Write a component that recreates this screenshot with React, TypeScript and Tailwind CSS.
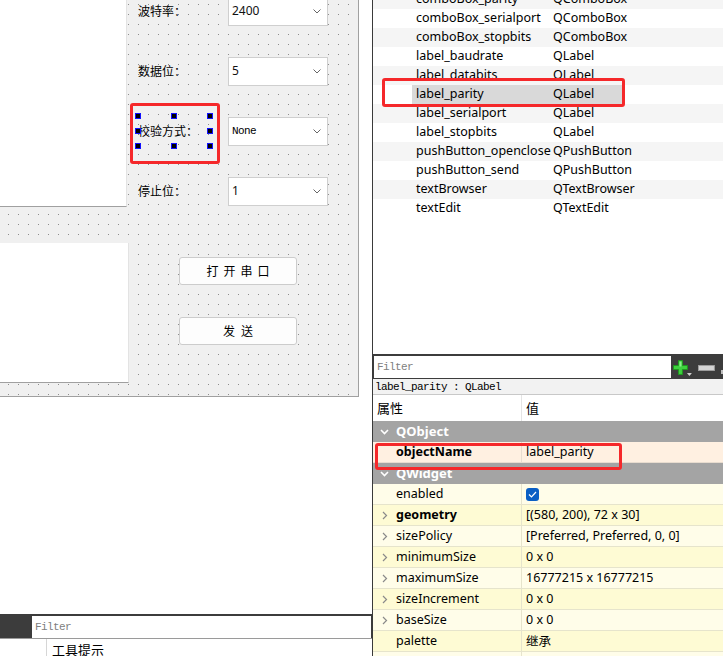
import React from 'react';

const objects: [string, string][] = [
	['comboBox_parity', 'QComboBox'],
	['comboBox_serialport', 'QComboBox'],
	['comboBox_stopbits', 'QComboBox'],
	['label_baudrate', 'QLabel'],
	['label_databits', 'QLabel'],
	['label_parity', 'QLabel'],
	['label_serialport', 'QLabel'],
	['label_stopbits', 'QLabel'],
	['pushButton_openclose', 'QPushButton'],
	['pushButton_send', 'QPushButton'],
	['textBrowser', 'QTextBrowser'],
	['textEdit', 'QTextEdit'],
];

type Prop = { name: string; value?: string; bold?: boolean; expand?: boolean; check?: boolean };

const widgetProps: Prop[] = [
	{ name: 'enabled', check: true },
	{ name: 'geometry', value: '[(580, 200), 72 x 30]', bold: true, expand: true },
	{ name: 'sizePolicy', value: '[Preferred, Preferred, 0, 0]', expand: true },
	{ name: 'minimumSize', value: '0 x 0', expand: true },
	{ name: 'maximumSize', value: '16777215 x 16777215', expand: true },
	{ name: 'sizeIncrement', value: '0 x 0', expand: true },
	{ name: 'baseSize', value: '0 x 0', expand: true },
	{ name: 'palette', value: '继承' },
	{ name: '', value: '' },
];

const fields = [
	{ label: '波特率：', value: '2400' },
	{ label: '数据位：', value: '5' },
	{ label: '校验方式：', value: 'None', mono: true, selected: true },
	{ label: '停止位：', value: '1' },
];

function Chevron({ down, color = '#8a8a8a' }: { down?: boolean; color?: string }) {
	return down ? (
		<svg width="9" height="6" viewBox="0 0 9 6">
			<polyline points="1,1 4.5,4.5 8,1" fill="none" stroke={color} strokeWidth="1.6" />
		</svg>
	) : (
		<svg width="6" height="9" viewBox="0 0 6 9">
			<polyline points="1,1 4.5,4.5 1,8" fill="none" stroke={color} strokeWidth="1.2" />
		</svg>
	);
}

function Combo({ value, mono }: { value: string; mono?: boolean }) {
	return (
		<div className="w-[100px] h-[29px] bg-white border border-[#cfcfcf] flex items-center pl-[3px] pr-[6px]">
			<span
				className={
					mono
						? "flex-1 font-['Liberation_Mono',monospace] text-[11px] tracking-[-0.6px] text-black"
						: "flex-1 font-['Noto_Sans',sans-serif] text-[12px] text-[#111]"
				}>
				{value}
			</span>
			<svg width="8" height="5" viewBox="0 0 8 5">
				<polyline points="0.5,0.5 4,4 7.5,0.5" fill="none" stroke="#666" strokeWidth="1" />
			</svg>
		</div>
	);
}

function Handle({ className }: { className: string }) {
	return <div className={`absolute w-[6px] h-[6px] bg-black border border-[#1010ff] ${className}`} />;
}

export default function App() {
	return (
		<div className="relative w-[723px] h-[656px] flex bg-white overflow-hidden font-['Noto_Sans','Noto_Sans_CJK_SC',sans-serif] text-black">
			{/* left: form canvas */}
			<div className="w-[372px] shrink-0 flex flex-col">
				<div className="w-[359px] h-[397px] shrink-0 flex border-r border-b border-[#a0a0a0] bg-[#f0f0f0] bg-[conic-gradient(from_270deg_at_1px_1px,#8c8c8c_90deg,transparent_0)] bg-size-[10px_10px] bg-position-[8px_4px] overflow-hidden">
					<div className="w-[129px] shrink-0 flex flex-col">
						<div className="h-[207px] w-[127px] bg-white border-b border-r border-b-[#a0a0a0] border-r-[#e3e3e3]" />
						<div className="mt-[36px] h-[140px] w-[129px] bg-white border-b border-r border-b-[#a0a0a0] border-r-[#e3e3e3]" />
					</div>
					<div className="ml-[9px] -mt-[4px] flex flex-col">
						<div className="flex flex-col gap-[30px]">
							{fields.map((f) => (
								<div key={f.label} className="h-[30px] flex items-center">
									<div className="relative w-[72px] h-[30px] mr-[18px] flex items-center font-['Noto_Sans_CJK_SC',sans-serif] text-[12px] leading-none">
										{f.label}
										{f.selected && (
											<>
												<Handle className="left-[-3px] top-[-3px]" />
												<Handle className="left-[33px] top-[-3px]" />
												<Handle className="left-[69px] top-[-3px]" />
												<Handle className="left-[-3px] top-[12px]" />
												<Handle className="left-[69px] top-[12px]" />
												<Handle className="left-[-3px] top-[27px]" />
												<Handle className="left-[33px] top-[27px]" />
												<Handle className="left-[69px] top-[27px]" />
											</>
										)}
									</div>
									<Combo value={f.value} mono={f.mono} />
								</div>
							))}
						</div>
						<div className="ml-[41px] mt-[51px] flex flex-col gap-[32px] font-['Noto_Sans_CJK_SC',sans-serif] text-[12px]">
							<button className="w-[118px] h-[28px] rounded-[3px] bg-[#fdfdfd] border border-[#cccccc] flex items-center justify-center gap-[5px]">
								<span>打</span>
								<span>开</span>
								<span>串</span>
								<span>口</span>
							</button>
							<button className="w-[118px] h-[28px] rounded-[3px] bg-[#fdfdfd] border border-[#cccccc] flex items-center justify-center gap-[6px]">
								<span>发</span>
								<span>送</span>
							</button>
						</div>
					</div>
				</div>
				<div className="flex-1" />
				<div className="h-[42px] shrink-0 flex flex-col">
					<div className="h-[24px] bg-[#3c3c3c] pt-[2px] pl-[32px] flex">
						<div className="w-[339px] h-[22px] bg-white flex items-center pl-[3px] pt-[1px] font-['Liberation_Mono',monospace] text-[11px] tracking-[-0.6px] text-[#808080]">
							Filter
						</div>
					</div>
					<div className="flex-1 border-t border-[#9a9a9a] pl-[46px] flex">
						<div className="border-l border-[#d6d6d6] pl-[5px] pt-[3px] font-['Noto_Sans_CJK_SC',sans-serif] text-[13px] leading-[16px]">
							工具提示
						</div>
					</div>
				</div>
			</div>

			{/* right: object inspector + property editor */}
			<div className="flex-1 min-w-0 flex flex-col border-l border-[#3a3a3a] text-[12.5px]">
				<div className="h-[354px] shrink-0 overflow-hidden bg-white">
					<div className="-mt-[10px]">
						{objects.map(([name, cls], i) => {
							const sel = name === 'label_parity';
							return (
								<div key={name} className={`h-[19px] flex ${i % 2 === 0 ? 'bg-[#f5f5f5]' : 'bg-white'}`}>
									<div className="w-[39px] shrink-0" />
									<div className={`w-[210px] flex items-center pl-[4px] ${sel ? 'bg-[#d9d9d9]' : ''}`}>
										<span className="w-[137px] shrink-0">{name}</span>
										<span>{cls}</span>
									</div>
								</div>
							);
						})}
					</div>
				</div>

				<div className="h-[25px] shrink-0 bg-[#3c3c3c] pt-[2px] pl-[1px] flex items-start">
					<div className="w-[299px] h-[22px] bg-white flex items-center pl-[3px] pt-[1px] font-['Liberation_Mono',monospace] text-[11px] tracking-[-0.6px] text-[#808080]">
						Filter
					</div>
					<svg width="20" height="17" viewBox="0 0 20 17" className="ml-[2px] mt-[4px]">
						<path d="M5.5 0.5h4v5h5v4h-5v5h-4v-5h-5v-4h5z" fill="#3fd23f" stroke="#1f9a1f" />
						<path d="M6.5 1.5h2v5h-2z" fill="#8cf08c" />
						<path d="M14 13h5l-2.5 3z" fill="#d0d0d0" />
					</svg>
					<svg width="18" height="7" viewBox="0 0 18 7" className="ml-[5px] mt-[9px]">
						<rect x="0.5" y="0.5" width="16" height="5" fill="#d4d4d4" stroke="#9c9c9c" />
					</svg>
					<div className="ml-[5px] mt-[14px] w-[2px] h-[4px] bg-[#bdbdbd]" />
				</div>

				<div className="h-[16px] shrink-0 bg-[#f2f2f2] border-b border-[#c8c8c8] flex items-center pl-[2px] pt-[2px] font-['Liberation_Mono',monospace] text-[11px] tracking-[-0.6px] text-black">
					label_parity : QLabel
				</div>

				<div className="h-[26px] shrink-0 flex bg-white font-['Noto_Sans_CJK_SC',sans-serif] text-[13px]">
					<div className="w-[149px] border-r border-[#e4e4e4] flex items-center pl-[4px]">属性</div>
					<div className="flex items-center pl-[4px]">值</div>
				</div>

				<div className="h-[21px] shrink-0 bg-[#a4a4a4] flex items-center text-white font-bold text-[13px]">
					<div className="w-[23px] flex justify-center">
						<Chevron down color="#ffffff" />
					</div>
					QObject
				</div>
				<div className="h-[21px] shrink-0 flex bg-[#fff0e1] border-b border-[#e8dccf]">
					<div className="w-[149px] border-r border-[#e8dccf] flex items-center pl-[23px] font-bold">objectName</div>
					<div className="flex items-center pl-[4px]">label_parity</div>
				</div>
				<div className="h-[21px] shrink-0 bg-[#a4a4a4] flex items-center text-white font-bold text-[13px]">
					<div className="w-[23px] flex justify-center">
						<Chevron down color="#ffffff" />
					</div>
					QWidget
				</div>
				{widgetProps.map((p, i) => (
					<div
						key={p.name || 'next'}
						className={`h-[21px] shrink-0 flex border-b border-[#e6e4cc] ${i % 2 === 0 ? 'bg-[#fffde9]' : 'bg-[#fefbd4]'}`}>
						<div className="w-[149px] shrink-0 border-r border-[#e6e4cc] flex items-center">
							<div className="w-[23px] flex justify-center">{p.expand && <Chevron />}</div>
							<span className={p.bold ? 'font-bold' : ''}>{p.name}</span>
						</div>
						<div className="flex items-center pl-[4px]">
							{p.check ? (
								<div className="w-[13px] h-[13px] rounded-[3px] bg-[#0b5fc4] flex items-center justify-center">
									<svg width="9" height="7" viewBox="0 0 9 7">
										<polyline points="1,3.5 3.5,6 8,1" fill="none" stroke="#fff" strokeWidth="1.2" />
									</svg>
								</div>
							) : (
								<span className={p.value === '继承' ? "font-['Noto_Sans_CJK_SC',sans-serif]" : ''}>{p.value}</span>
							)}
						</div>
					</div>
				))}
			</div>

			{/* red annotation boxes */}
			<div className="absolute left-[130px] top-[103px] w-[90px] h-[61px] border-[3px] border-[#f5282a] rounded-[3px]" />
			<div className="absolute left-[382px] top-[78px] w-[243px] h-[29px] border-[3px] border-[#f5282a] rounded-[3px]" />
			<div className="absolute left-[375px] top-[443px] w-[247px] h-[27px] border-[3px] border-[#f5282a] rounded-[3px]" />
		</div>
	);
}
